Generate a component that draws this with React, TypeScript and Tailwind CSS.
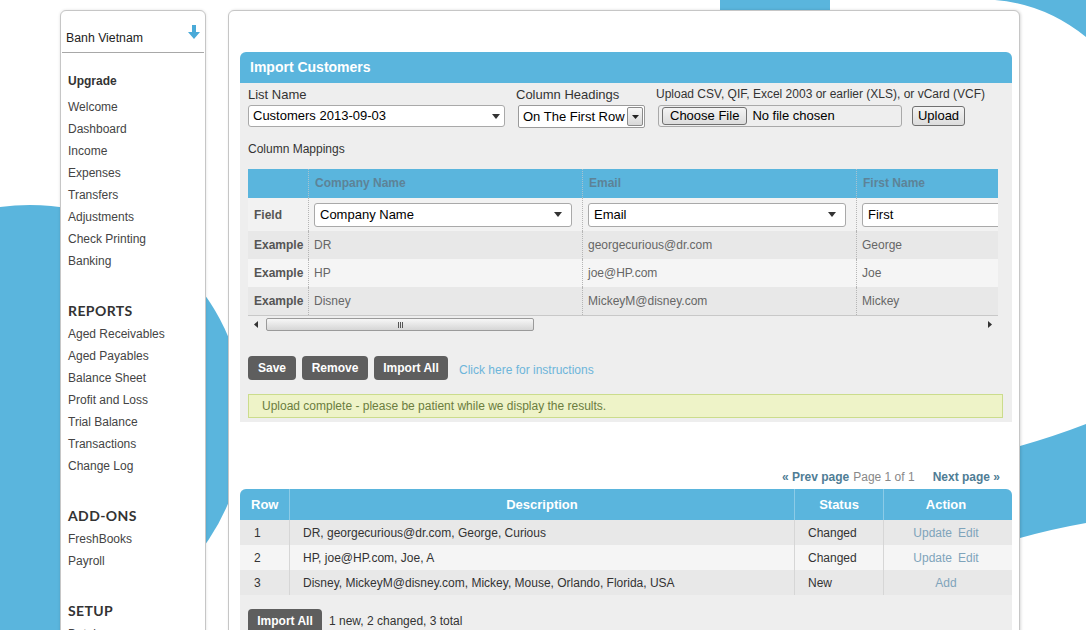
import React from "react";

const BLUE = "#5ab5dd";

function SideItem({ children }: { children: React.ReactNode }) {
  return <div className="h-[22px] leading-[22px] text-[12px] text-[#444]">{children}</div>;
}

function SideHead({ children }: { children: React.ReactNode }) {
  return (
    <div className="mt-[27px] h-[24px] leading-[24px] font-['Lato',sans-serif] font-bold text-[14px] text-[#333] tracking-[0.4px]">
      {children}
    </div>
  );
}

function DarkButton({ children, w }: { children: React.ReactNode; w: string }) {
  return (
    <div className={`${w} h-[24px] rounded-[4px] bg-[#5e5e5e] text-white font-bold text-[12px] flex items-center justify-center`}>
      {children}
    </div>
  );
}

function Caret() {
  return (
    <svg width="8" height="5" viewBox="0 0 8 5" className="shrink-0">
      <path d="M0 0 H8 L4 5 Z" fill="#333" />
    </svg>
  );
}

function MapSelect({ text }: { text: string }) {
  return (
    <div className="w-[258px] h-[24px] bg-white border border-[#a9a9a9] rounded-[3px] flex items-center justify-between pl-[5px] pr-[9px] text-[13px] text-black shrink-0">
      <span>{text}</span>
      <Caret />
    </div>
  );
}

export default function App() {
  const sideMain = ["Welcome", "Dashboard", "Income", "Expenses", "Transfers", "Adjustments", "Check Printing", "Banking"];
  const reports = ["Aged Receivables", "Aged Payables", "Balance Sheet", "Profit and Loss", "Trial Balance", "Transactions", "Change Log"];
  const examples = [
    { c: "DR", e: "georgecurious@dr.com", f: "George", bg: "bg-[#e8e8e8]" },
    { c: "HP", e: "joe@HP.com", f: "Joe", bg: "bg-[#f5f5f5]" },
    { c: "Disney", e: "MickeyM@disney.com", f: "Mickey", bg: "bg-[#e8e8e8]" },
  ];
  const results = [
    { n: "1", d: "DR, georgecurious@dr.com, George, Curious", s: "Changed", a: ["Update", "Edit"], bg: "bg-[#e8e8e8]" },
    { n: "2", d: "HP, joe@HP.com, Joe, A", s: "Changed", a: ["Update", "Edit"], bg: "bg-[#f5f5f5]" },
    { n: "3", d: "Disney, MickeyM@disney.com, Mickey, Mouse, Orlando, Florida, USA", s: "New", a: ["Add"], bg: "bg-[#e8e8e8]" },
  ];

  return (
    <div className="relative w-[1086px] h-[630px] overflow-hidden bg-white font-['Liberation_Sans',Arial,sans-serif]">
      <svg className="absolute inset-0" width="1086" height="630" viewBox="0 0 1086 630">
        <circle cx="30" cy="420" r="215" fill={BLUE} />
        <rect x="720" y="0" width="110" height="16" fill={BLUE} />
        <path d="M995 0 Q1045 4 1086 37 L1086 0 Z" fill={BLUE} />
        <path d="M1020 446 Q1055 436 1086 424 L1086 523 Q1052 529 1020 538 Z" fill={BLUE} />
      </svg>

      <div className="relative flex pt-[10px] pl-[60px] gap-[22px]">
        {/* Sidebar */}
        <div className="w-[146px] h-[640px] bg-white border border-[#c6c6c6] rounded-t-[6px] shadow-[0_0_3px_rgba(0,0,0,0.12)] shrink-0">
          <div className="h-[42px] flex justify-between px-[4px] pt-[14px] border-b border-[#a8a8a8] mx-[1px]">
            <span className="mt-[5px] text-[12.3px] text-[#222] leading-[16px]">Banh Vietnam</span>
            <svg width="12" height="14" viewBox="0 0 12 14">
              <path d="M4 0 H8 V7 H12 L6 14 L0 7 H4 Z" fill="#4aaad8" />
            </svg>
          </div>
          <div className="pl-[7px] pt-[17px]">
            <div className="h-[22px] leading-[22px] text-[12px] font-bold text-[#333] mb-[4px]">Upgrade</div>
            {sideMain.map((s) => (
              <SideItem key={s}>{s}</SideItem>
            ))}
            <SideHead>REPORTS</SideHead>
            {reports.map((s) => (
              <SideItem key={s}>{s}</SideItem>
            ))}
            <SideHead>ADD-ONS</SideHead>
            <SideItem>FreshBooks</SideItem>
            <SideItem>Payroll</SideItem>
            <SideHead>SETUP</SideHead>
            <SideItem>Databases</SideItem>
          </div>
        </div>

        {/* Main panel */}
        <div className="w-[792px] h-[640px] bg-white border border-[#c6c6c6] rounded-t-[6px] shadow-[1px_0_3px_rgba(0,0,0,0.15)] pt-[41px] pl-[11px] shrink-0">
          <div className="w-[772px]">
            <div className="h-[31px] rounded-t-[6px] bg-[#5ab5dd] flex items-center px-[10px] text-white font-bold text-[14px]">
              Import Customers
            </div>
            <div className="h-[339px] bg-[#eeeeee] pl-[8px] pt-[4px]">
              {/* form row */}
              <div className="flex">
                <div className="w-[257px]">
                  <div className="text-[13px] leading-[15px] text-[#333]">List Name</div>
                  <div className="mt-[3px] h-[22px] bg-white border border-[#a9a9a9] rounded-[3px] flex items-center justify-between pl-[4px] pr-[4px] text-[13px] text-black">
                    <span>Customers 2013-09-03</span>
                    <Caret />
                  </div>
                </div>
                <div className="ml-[11px]">
                  <div className="text-[13px] leading-[15px] text-[#333]">Column Headings</div>
                  <div className="mt-[3px] ml-[2px] w-[127px] h-[23px] bg-white border border-[#9a9a9a] rounded-[2px] flex items-center justify-between pl-[4px] text-[13px] text-black">
                    <span>On The First Row</span>
                    <div className="w-[16px] h-[19px] mr-[1px] border border-[#8a8a8a] rounded-[2px] bg-gradient-to-b from-[#f8f8f8] to-[#d8d8d8] flex items-center justify-center">
                      <svg width="7" height="4" viewBox="0 0 7 4">
                        <path d="M0 0 H7 L3.5 4 Z" fill="#222" />
                      </svg>
                    </div>
                  </div>
                </div>
                <div className="ml-[11px]">
                  <div className="text-[12px] leading-[15px] text-[#333] whitespace-nowrap">
                    Upload CSV, QIF, Excel 2003 or earlier (XLS), or vCard (VCF)
                  </div>
                  <div className="mt-[3px] flex items-start">
                    <div className="ml-[2px] w-[244px] h-[22px] border border-[#a9a9a9] rounded-[3px] flex items-center pl-[3px] text-[13px] text-black">
                      <div className="h-[18px] px-[7px] border border-[#707070] rounded-[3px] bg-gradient-to-b from-[#f4f4f4] to-[#dcdcdc] flex items-center">
                        Choose File
                      </div>
                      <span className="ml-[5px]">No file chosen</span>
                    </div>
                    <div className="ml-[10px] mt-[1px] w-[53px] h-[20px] border border-[#707070] rounded-[3px] bg-gradient-to-b from-[#f4f4f4] to-[#dcdcdc] flex items-center justify-center text-[13px] text-black">
                      Upload
                    </div>
                  </div>
                </div>
              </div>

              <div className="mt-[14px] text-[12px] leading-[15px] text-[#333]">Column Mappings</div>

              {/* mapping table */}
              <div className="mt-[12px] w-[750px] overflow-hidden">
                <div className="w-[900px]">
                  <div className="flex h-[29px] bg-[#5ab5dd] text-[12px] font-bold text-[#5d8397]">
                    <div className="w-[60px] shrink-0" />
                    {["Company Name", "Email", "First Name"].map((h) => (
                      <div key={h} className="w-[274px] shrink-0 border-l border-dotted border-[#a7c3d0] pl-[6px] pb-[1px] flex items-center">
                        {h}
                      </div>
                    ))}
                  </div>
                  <div className="flex h-[33px] bg-[#f2f2f2] text-[12px]">
                    <div className="w-[60px] shrink-0 pl-[6px] flex items-center font-bold text-[#555]">Field</div>
                    {["Company Name", "Email", "First"].map((h, i) => (
                      <div key={h} className="w-[274px] shrink-0 border-l border-dotted border-[#b5b5b5] pl-[5px] flex items-center">
                        {i < 2 ? (
                          <MapSelect text={h} />
                        ) : (
                          <div className="w-[258px] h-[24px] bg-white border border-[#a9a9a9] rounded-[3px] flex items-center pl-[5px] text-[13px] text-black">
                            {h}
                          </div>
                        )}
                      </div>
                    ))}
                  </div>
                  {examples.map((r) => (
                    <div key={r.c} className={`flex h-[28px] ${r.bg} text-[12px] text-[#666]`}>
                      <div className="w-[60px] shrink-0 pl-[6px] flex items-center font-bold text-[#555]">Example</div>
                      {[r.c, r.e, r.f].map((v) => (
                        <div key={v} className="w-[274px] shrink-0 border-l border-dotted border-[#b5b5b5] pl-[5px] flex items-center">
                          {v}
                        </div>
                      ))}
                    </div>
                  ))}
                  <div className="h-[1px] bg-[#c8c8c8]" />
                </div>
                {/* scrollbar */}
                <div className="h-[17px] bg-[#eeeeee] flex items-center relative">
                  <svg width="4" height="7" viewBox="0 0 4 7" className="ml-[6px]">
                    <path d="M4 0 V7 L0 3.5 Z" fill="#333" />
                  </svg>
                  <div className="ml-[8px] w-[268px] h-[13px] border border-[#9a9a9a] rounded-[2px] bg-gradient-to-b from-[#f7f7f7] to-[#d6d6d6] flex items-center justify-center gap-[1px]">
                    <div className="w-[1px] h-[6px] bg-[#555]" />
                    <div className="w-[1px] h-[6px] bg-[#555]" />
                    <div className="w-[1px] h-[6px] bg-[#555]" />
                  </div>
                  <div className="flex-1" />
                  <svg width="4" height="7" viewBox="0 0 4 7" className="mr-[6px]">
                    <path d="M0 0 V7 L4 3.5 Z" fill="#333" />
                  </svg>
                </div>
              </div>

              {/* buttons */}
              <div className="mt-[23px] flex items-center gap-[6px]">
                <DarkButton w="w-[48px]">Save</DarkButton>
                <DarkButton w="w-[66px]">Remove</DarkButton>
                <DarkButton w="w-[74px]">Import All</DarkButton>
                <span className="ml-[5px] mt-[4px] text-[12px] text-[#6db5da]">Click here for instructions</span>
              </div>

              <div className="mt-[14px] w-[755px] h-[24px] border border-[#cbdc8c] bg-[#eef3c8] pl-[13px] text-[12px] leading-[22px] text-[#6b7d3e]">
                Upload complete - please be patient while we display the results.
              </div>
            </div>

            {/* pagination */}
            <div className="mt-[48px] flex justify-end pr-[12px] text-[12px] leading-[14px]">
              <span className="font-bold text-[#4f7d95]">« Prev page</span>
              <span className="ml-[4px] text-[#888]">Page 1 of 1</span>
              <span className="ml-[18px] font-bold text-[#4f7d95]">Next page »</span>
            </div>

            {/* results */}
            <div className="mt-[5px] bg-[#eeeeee] rounded-t-[6px] h-[200px]">
              <div className="flex h-[31px] rounded-t-[6px] bg-[#5ab5dd] text-white font-bold text-[13px]">
                <div className="w-[49px] pl-[11px] flex items-center">Row</div>
                <div className="w-[505px] border-l border-[#8ccbe7] flex items-center justify-center">Description</div>
                <div className="w-[89px] border-l border-[#8ccbe7] flex items-center justify-center">Status</div>
                <div className="flex-1 border-l border-[#8ccbe7] flex items-center justify-center pr-[4px]">Action</div>
              </div>
              {results.map((r) => (
                <div key={r.n} className={`flex h-[25px] ${r.bg} text-[12px] text-[#333]`}>
                  <div className="w-[49px] pl-[14px] flex items-center">{r.n}</div>
                  <div className="w-[505px] border-l border-[#d6d6d6] pl-[13px] flex items-center">{r.d}</div>
                  <div className="w-[89px] border-l border-[#d6d6d6] pl-[13px] flex items-center">{r.s}</div>
                  <div className="flex-1 border-l border-[#d6d6d6] flex items-center justify-center gap-[6px] pr-[4px] text-[#7fa4bb]">
                    {r.a.map((a) => (
                      <span key={a}>{a}</span>
                    ))}
                  </div>
                </div>
              ))}
              <div className="pt-[14px] pl-[8px] flex items-center">
                <DarkButton w="w-[74px]">Import All</DarkButton>
                <span className="ml-[7px] text-[12px] text-[#333]">1 new, 2 changed, 3 total</span>
              </div>
            </div>
          </div>
        </div>
      </div>
    </div>
  );
}
